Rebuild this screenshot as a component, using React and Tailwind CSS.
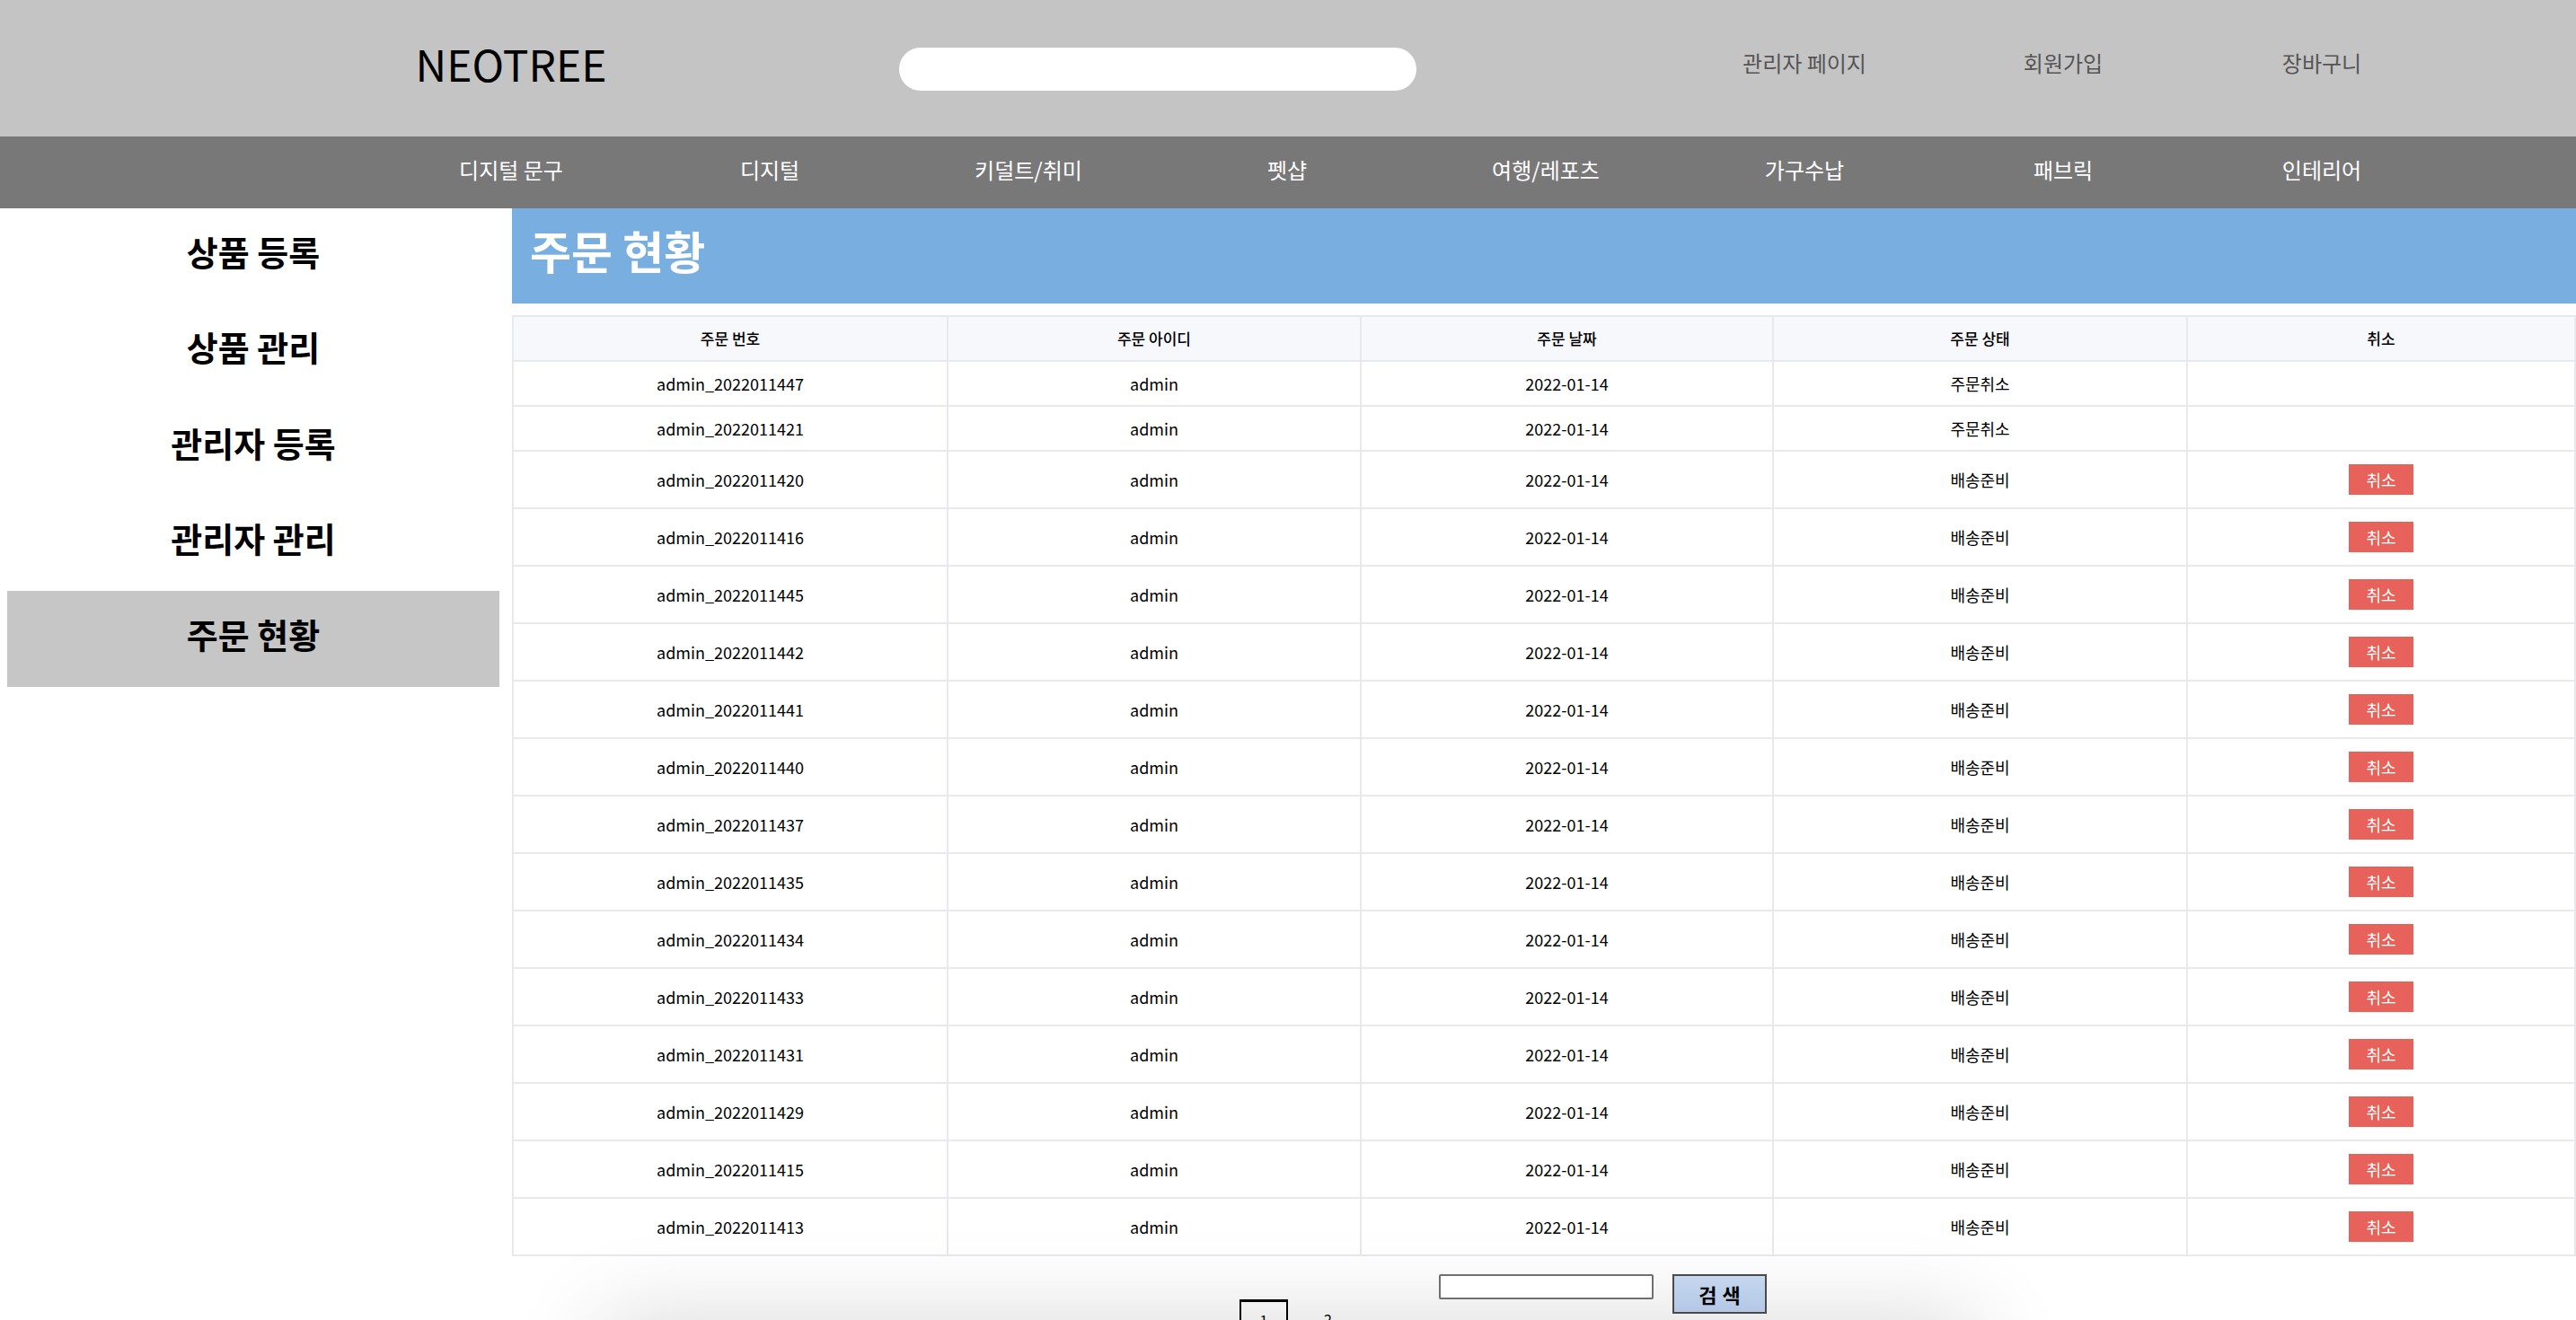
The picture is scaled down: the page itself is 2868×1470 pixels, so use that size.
import React from "react";

const FONT = { fontFamily: '"Noto Sans CJK KR", "Noto Sans", sans-serif' };

const navItems = ["디지털 문구", "디지털", "키덜트/취미", "펫샵", "여행/레포츠", "가구수납", "패브릭", "인테리어"];
const sideItems = ["상품 등록", "상품 관리", "관리자 등록", "관리자 관리", "주문 현황"];

const orders = [
  { id: "admin_2022011447", status: "주문취소" },
  { id: "admin_2022011421", status: "주문취소" },
  { id: "admin_2022011420", status: "배송준비" },
  { id: "admin_2022011416", status: "배송준비" },
  { id: "admin_2022011445", status: "배송준비" },
  { id: "admin_2022011442", status: "배송준비" },
  { id: "admin_2022011441", status: "배송준비" },
  { id: "admin_2022011440", status: "배송준비" },
  { id: "admin_2022011437", status: "배송준비" },
  { id: "admin_2022011435", status: "배송준비" },
  { id: "admin_2022011434", status: "배송준비" },
  { id: "admin_2022011433", status: "배송준비" },
  { id: "admin_2022011431", status: "배송준비" },
  { id: "admin_2022011429", status: "배송준비" },
  { id: "admin_2022011415", status: "배송준비" },
  { id: "admin_2022011413", status: "배송준비" },
];

function Header() {
  return (
    <div className="bg-[#c4c4c4] h-[152px] pl-[425px] grid grid-cols-[repeat(8,288px)] items-center">
      <div className="text-center text-[48px] leading-none text-black pb-[12px]">NEOTREE</div>
      <div />
      <div className="col-span-2 flex items-center pt-[2px]">
        <input className="w-full h-[48px] bg-white rounded-full outline-none px-6" />
      </div>
      <div />
      <a className="text-center text-[24px] text-[#555] pb-[12px]">관리자 페이지</a>
      <a className="text-center text-[24px] text-[#555] pb-[12px]">회원가입</a>
      <a className="text-center text-[24px] text-[#555] pb-[12px]">장바구니</a>
    </div>
  );
}

function Nav() {
  return (
    <div className="bg-[#787878] h-[80px] pl-[425px] grid grid-cols-[repeat(8,288px)] items-center">
      {navItems.map((item) => (
        <div key={item} className="text-center text-white text-[24px] pb-[6px]">
          {item}
        </div>
      ))}
    </div>
  );
}

function Sidebar() {
  return (
    <div className="w-[570px] shrink-0 pl-[8px] pr-[14px]">
      {sideItems.map((item) => (
        <div
          key={item}
          className={`h-[106.5px] flex items-center justify-center text-[38px] font-bold text-black pb-[12px] ${
            item === "주문 현황" ? "bg-[#c6c6c6]" : ""
          }`}
        >
          {item}
        </div>
      ))}
    </div>
  );
}

function OrderTable() {
  const th = "border-2 border-[#e8e8ef] py-[14px] text-[17px] leading-[20px] font-medium text-black";
  const td = "border-2 border-[#e8e8ef] py-[14px] text-[18px] leading-[20px] text-black";
  return (
    <table className="w-full table-fixed border-collapse text-center">
      <colgroup>
        <col className="w-[484px]" />
        <col className="w-[460px]" />
        <col className="w-[459px]" />
        <col className="w-[461px]" />
        <col />
      </colgroup>
      <thead>
        <tr className="bg-[#f7f8fc]">
          <th className={th}>주문 번호</th>
          <th className={th}>주문 아이디</th>
          <th className={th}>주문 날짜</th>
          <th className={th}>주문 상태</th>
          <th className={th}>취소</th>
        </tr>
      </thead>
      <tbody>
        {orders.map((o) => (
          <tr key={o.id}>
            <td className={td}>{o.id}</td>
            <td className={td}>admin</td>
            <td className={td}>2022-01-14</td>
            <td className={td}>{o.status}</td>
            <td className={td}>
              {o.status === "배송준비" && (
                <button className="w-[72px] h-[34px] bg-[#e6625a] text-white text-[18px] align-middle">
                  취소
                </button>
              )}
            </td>
          </tr>
        ))}
      </tbody>
    </table>
  );
}

export default function App() {
  return (
    <div className="w-[2868px] h-[1470px] overflow-hidden bg-white" style={FONT}>
      <Header />
      <Nav />
      <div className="flex">
        <Sidebar />
        <div className="flex-1 min-w-0">
          <div className="h-[106px] bg-[#78aee0] flex items-center pl-[20px]">
            <h1 className="text-[50px] font-bold text-white leading-none pb-[14px]">주문 현황</h1>
          </div>
          <div className="mt-[13px]">
            <OrderTable />
          </div>
          <div className="mt-[20px] h-[28px] flex items-start gap-[21px] pl-[1032px]">
            <input className="w-[239px] h-[28px] bg-white border-2 border-[#707070] rounded-[2px] outline-none" />
            <button className="w-[105px] h-[44px] shrink-0 bg-gradient-to-b from-[#c6d8ef] to-[#b3c7e5] border-2 border-[#4a4a4a] text-[22px] font-bold text-black tracking-[6px] pl-[6px]">
              검색
            </button>
          </div>
          <div className="flex items-start gap-[40px] pl-[810px] h-[50px]">
            <div className="w-[54px] h-[50px] border-2 border-t-[3px] border-black flex justify-center pt-[8px] text-[16px]">
              1
            </div>
            <div className="pt-[10px] text-[16px]">2</div>
          </div>
          <div className="ml-[130px] w-[1470px] h-[200px] shadow-[0_0_100px_30px_rgba(0,0,0,0.15)]" />
        </div>
      </div>
    </div>
  );
}
